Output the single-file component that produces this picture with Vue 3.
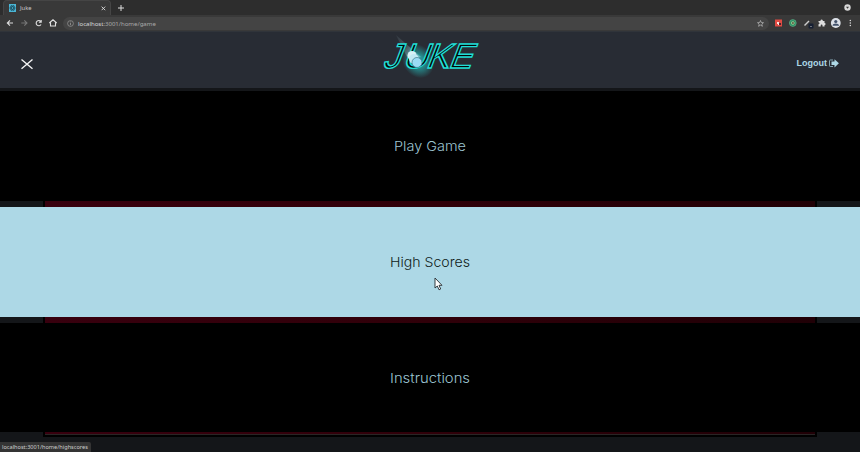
<script setup>
const items = [
  { label: 'Play Game', width: 72 },
  { label: 'High Scores', width: 80, active: true },
  { label: 'Instructions', width: 80 },
]
</script>

<template>
  <div class="window">
    <div class="tabs">
      <div class="tab">
        <svg class="favicon" width="7" height="8" viewBox="0 0 7 8"><rect width="7" height="8" fill="#4bb6d5" /><g fill="none" stroke="#17404f" stroke-width=".6"><ellipse cx="3.5" cy="4" rx="2.8" ry="1.2" /><ellipse cx="3.5" cy="4" rx="2.8" ry="1.2" transform="rotate(60 3.5 4)" /><ellipse cx="3.5" cy="4" rx="2.8" ry="1.2" transform="rotate(120 3.5 4)" /></g></svg>
        <span class="title">Juke</span>
        <svg width="5" height="5" viewBox="0 0 5 5"><path d="M.6.6l3.6 3.6M4.2.6L.6 4.2" stroke="#ddd" stroke-width=".9" /></svg>
      </div>
      <svg class="plus" width="6" height="6" viewBox="0 0 6 6"><path d="M3 0v6M0 3h6" stroke="#ddd" /></svg>
      <svg class="drop" width="7" height="7" viewBox="0 0 7 7"><circle cx="3.5" cy="3.5" r="3.2" fill="#d8d8d8" /><path d="M2 2.8h3L3.5 4.8z" fill="#333" /></svg>
    </div>
    <div class="toolbar">
      <svg width="60" height="16" viewBox="0 0 60 16" fill="none" stroke="#dedede" stroke-width="1.1">
        <path d="M13 8H7.5M10 5.3L7.3 8l2.7 2.7" />
        <path d="M21.300 8h5.500M24.300 5.300L27 8l-2.700 2.700" stroke="#777" />
        <path d="M41 6.800A2.600 2.600 0 1 0 41 9.500M41.200 5v2.300h-2.300" />
        <path d="M49.300 8L53 4.800 56.700 8M50.500 7.500v3.500h5V7.500" />
      </svg>
      <div class="address">
        <svg width="7" height="7" viewBox="0 0 7 7" fill="none" stroke="#999"><circle cx="3.500" cy="3.500" r="2.900" stroke-width=".7" /><path d="M3.500 3v2.200M3.500 1.500v.8" stroke-width=".8" /></svg>
        <span class="url"><b>localhost</b>:3001/home/game</span>
        <svg class="star" width="7" height="7" viewBox="0 0 7 7"><path d="M3.500.5l.8 2 2.200.2-1.700 1.400.6 2.200-1.900-1.200-1.900 1.200.6-2.200L.5 2.700l2.200-.2z" fill="none" stroke="#bbb" stroke-width=".7" /></svg>
      </div>
      <svg width="91" height="16" viewBox="0 0 91 16">
        <rect x="6" y="4.500" width="7" height="7" fill="#e14b43" /><path d="M8 7h2v1h1.500v2H9V9H8z" fill="#f7e5e0" /><rect x="10" y="8" width="2" height="2" fill="#50222a" />
        <circle cx="23.800" cy="8" r="3.400" fill="#278c62" stroke="#6db890" stroke-width=".6" /><circle cx="23.800" cy="8" r="1.500" fill="none" stroke="#b2d39a" stroke-width=".7" /><circle cx="24" cy="8" r=".7" fill="#bf3c35" />
        <path d="M35.500 10.500L40 6" stroke="#ccc" stroke-width="1.500" /><rect x="39.500" y="8.500" width="5" height="5" rx="1" fill="#172033" /><path d="M41 11.500h2" stroke="#aaa" stroke-width=".6" />
        <path d="M49.500 6h2a1.200 1.200 0 1 1 2.300 0h1.700v2a1.100 1.100 0 1 1 0 2.200v1.300h-2v-1a.8.8 0 0 0-1.800 0v1h-2.200V9.300a1 1 0 0 0 0-2z" fill="#ddd" />
        <circle cx="66.800" cy="8" r="4.900" fill="#dce1e8" /><circle cx="66.800" cy="6.500" r="1.600" fill="#40506a" /><path d="M63.500 10.800c.2-3 6.400-3 6.600 0z" fill="#40506a" />
        <g fill="#ddd"><circle cx="81.300" cy="5.400" r=".75" /><circle cx="81.300" cy="8" r=".75" /><circle cx="81.300" cy="10.600" r=".75" /></g>
      </svg>
    </div>

    <header class="header">
      <svg class="close" width="14" height="12" viewBox="0 0 14 12"><path d="M1.500 1.500l11 9.200M12.500 1.500l-11 9.200" stroke="#f4f4f4" stroke-width="1.400" /></svg>
      <svg class="logo" width="110" height="48" viewBox="0 0 110 48">
        <defs>
          <radialGradient id="glow"><stop offset=".35" stop-color="#25a5a5" stop-opacity=".85" /><stop offset="1" stop-color="#25a5a5" stop-opacity="0" /></radialGradient>
          <linearGradient id="tail" x1="0" y1="0" x2="1" y2="1"><stop stop-color="#a9cbd3" stop-opacity=".2" /><stop offset="1" stop-color="#d9f7ff" /></linearGradient>
        </defs>
        <ellipse cx="43" cy="29" rx="15" ry="18" fill="url(#glow)" transform="rotate(-35 43 29)" />
        <path d="M21 3L46 25 34 29z" fill="url(#tail)" opacity=".4" />
        <text class="wordmark" transform="translate(0 36) skewX(-21)"><tspan x="7">J</tspan><tspan x="26.500">U</tspan><tspan x="50">K</tspan><tspan x="72.500">E</tspan></text>
        <circle cx="37" cy="23.500" r="4.500" fill="#d7f1f5" /><circle cx="39" cy="27" r="5" fill="#c1e9f3" />
        <circle cx="42" cy="30.500" r="5" fill="#9adcf5" stroke="#3c7787" stroke-width=".7" />
      </svg>
      <div class="logout">
        <span>Logout</span>
        <svg width="10" height="9" viewBox="0 0 10 9"><path d="M4 1H1.200Q.5 1 .5 1.700v5.100q0 .7.700.7H4" fill="none" stroke="#86a9b6" /><path d="M2.500 2.600h3V.2L9.900 4.300 5.500 8.400V6h-3z" fill="#add8e6" /></svg>
      </div>
    </header>

    <main class="stage">
      <div class="board"><div class="field"></div></div>
      <nav class="menu">
        <a v-for="item in items" :key="item.label" class="item" :class="{ active: item.active }">
          <svg width="100" height="24" viewBox="0 0 100 24"><text x="50" y="16.500" text-anchor="middle" :textLength="item.width" lengthAdjust="spacingAndGlyphs">{{ item.label }}</text></svg>
        </a>
      </nav>
    </main>

    <div class="status">localhost:3001/home/highscores</div>
    <svg class="cursor" width="9" height="14" viewBox="0 0 9 14"><path d="M1 1v10l2.300-2 1.700 3.800 1.700-.8L5 8.300h3z" fill="#fff" stroke="#252b30" stroke-width=".9" /></svg>
  </div>
</template>

<style>
body { margin: 0; overflow: hidden; background: #141619; }
</style>

<style scoped>
.window { position: relative; width: 860px; height: 452px; overflow: hidden; display: flex; flex-direction: column; background: #141619; }
svg { display: block; flex: none; }
.tabs { height: 15px; flex: none; display: flex; align-items: center; background: #2d2d2d; font: 5.800px "Noto Sans", sans-serif; color: #ccc; }
.tab { box-sizing: border-box; width: 108px; height: 15px; margin-left: 3px; padding: 0 4px 0 5px; display: flex; align-items: center; background: #393939; border: 1px solid #454545; border-bottom: 0; border-radius: 4px 4px 0 0; }
.favicon { margin-right: 4px; }
.title { flex: 1; }
.plus { margin-left: 7px; }
.drop { margin-left: auto; margin-right: 9px; }
.toolbar { box-sizing: border-box; height: 17px; flex: none; display: flex; align-items: center; background: #393939; border-bottom: 1px solid #30343a; }
.address { flex: 1; height: 13px; margin-left: 3px; display: flex; align-items: center; border-radius: 7px; background: #444; padding: 0 5px 0 4px; }
.url { margin-left: 4px; font: 6.100px "Noto Sans", sans-serif; color: #aaa; letter-spacing: -.04px; }
.url b { font-weight: 400; color: #d8d8d8; }
.star { margin-left: auto; }
.header { box-sizing: border-box; height: 59px; flex: none; display: grid; grid-template-columns: 1fr 110px 1fr; align-items: center; padding: 0 21px 0 20px; background: #282c34; border-bottom: 3px solid #141619; }
.close { margin-top: 8px; }
.logo { margin-top: -8px; }
.wordmark { font: 35px "Liberation Sans", sans-serif; fill: #020808; stroke: #20ded6; stroke-width: 1.400px; }
.logout { display: flex; justify-content: flex-end; align-items: center; gap: 2px; margin-top: 6px; font: bold 9px "Liberation Sans", sans-serif; color: #add8e6; }
.stage { height: 361px; flex: none; display: grid; }
.board, .menu { grid-area: 1 / 1; }
.board { height: 344px; box-sizing: border-box; margin: 2px 43px 0; padding: 0 2px 2px; background: #000; }
.field { box-sizing: border-box; height: 342px; background: linear-gradient(90deg, #38000e, #300009 50%, #200006); border-bottom: 1px solid #292525; }
.menu { display: flex; flex-direction: column; gap: 6px; }
.item { height: 110px; flex: none; display: flex; align-items: center; justify-content: center; background: #000; }
.item:last-child { height: 109px; }
.item text { font: 300 13.500px Inter, sans-serif; fill: #9cc3d0; }
.item.active { background: #add8e6; }
.item.active text { fill: #101c20; }
.status { position: absolute; left: 0; bottom: 0; box-sizing: border-box; width: 91px; height: 10px; padding-left: 2px; border-radius: 0 2px 0 0; background: #343434; color: #ccc; font: 5.600px/10px "Noto Sans", sans-serif; white-space: nowrap; }
.cursor { position: absolute; left: 434px; top: 277px; }
</style>
